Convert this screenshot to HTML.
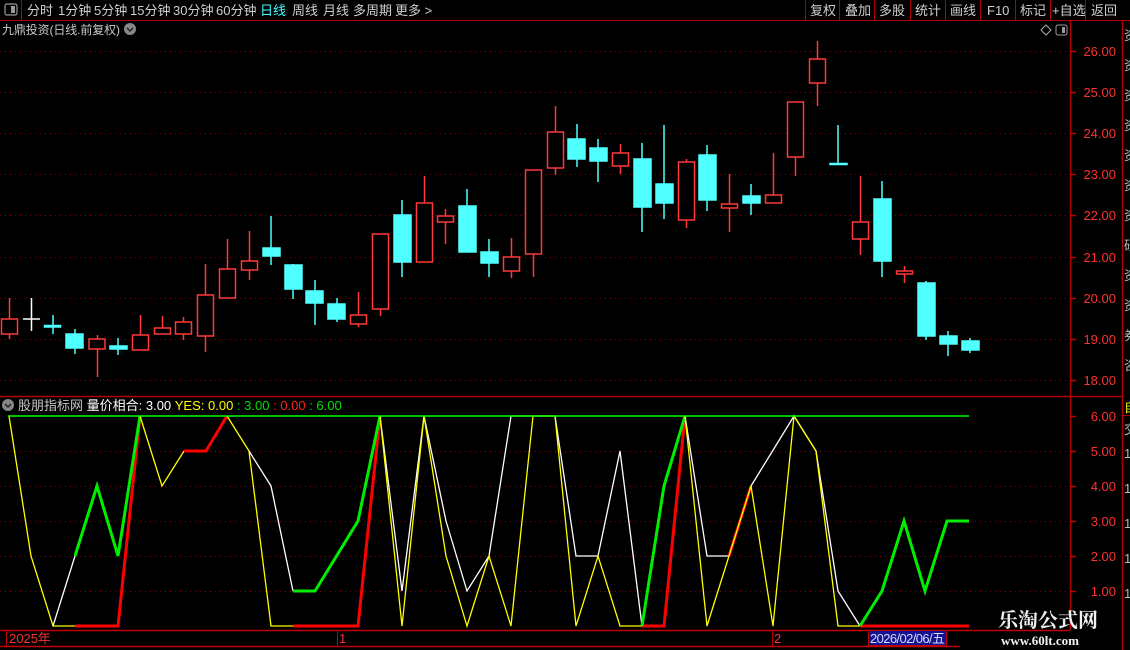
<!DOCTYPE html>
<html><head><meta charset="utf-8"><style>
body{margin:0;background:#000;width:1130px;height:650px;overflow:hidden;font-family:"Liberation Sans","Noto Sans CJK SC",sans-serif}
svg{position:absolute;left:0;top:0}
</style></head><body>
<svg width="1130" height="650" viewBox="0 0 1130 650" font-family="Liberation Sans, Noto Sans CJK SC, sans-serif">
<rect width="1130" height="650" fill="#000"/>
<!-- top bar -->
<line x1="0" y1="20.5" x2="1130" y2="20.5" stroke="#b00000"/>
<line x1="21.5" y1="0" x2="21.5" y2="20" stroke="#b00000"/>
<rect x="5" y="4" width="12" height="11" rx="2" fill="none" stroke="#999" stroke-width="1.2"/><rect x="11" y="6" width="4" height="7" fill="#999"/>
<g font-size="13" fill="#cfcfcf">
<text x="27" y="15">分时</text><text x="58" y="15">1分钟</text><text x="94" y="15">5分钟</text><text x="130" y="15">15分钟</text><text x="173" y="15">30分钟</text><text x="216" y="15">60分钟</text>
<text x="260" y="15" fill="#40ffff">日线</text><text x="292" y="15">周线</text><text x="323" y="15">月线</text><text x="353" y="15">多周期</text><text x="395" y="15">更多 &gt;</text>
<text x="810" y="15">复权</text><text x="845" y="15">叠加</text><text x="879" y="15">多股</text><text x="915" y="15">统计</text><text x="950" y="15">画线</text><text x="987" y="15">F10</text><text x="1020" y="15">标记</text><text x="1052" y="15">+自选</text><text x="1091" y="15">返回</text>
</g>
<g stroke="#b00000"><line x1="805.5" y1="0" x2="805.5" y2="20"/><line x1="839.5" y1="0" x2="839.5" y2="20"/><line x1="874.5" y1="0" x2="874.5" y2="20"/><line x1="910.5" y1="0" x2="910.5" y2="20"/><line x1="945.5" y1="0" x2="945.5" y2="20"/><line x1="980.5" y1="0" x2="980.5" y2="20"/><line x1="1015.5" y1="0" x2="1015.5" y2="20"/><line x1="1050.5" y1="0" x2="1050.5" y2="20"/><line x1="1085.5" y1="0" x2="1085.5" y2="20"/></g>
<text x="2" y="34" font-size="12" fill="#c8c8c8" textLength="118">九鼎投资(日线.前复权)</text>
<circle cx="130" cy="29" r="6" fill="#888"/><path d="M127 28l3 3 3-3" stroke="#222" stroke-width="1.5" fill="none"/>
<path d="M1041 30l5-5 5 5-5 5z" fill="none" stroke="#aaa"/>
<rect x="1056" y="25" width="11" height="10" rx="2" fill="none" stroke="#999"/><rect x="1062" y="27" width="3" height="6" fill="#999"/>
<!-- axes lines -->
<line x1="1070.5" y1="20" x2="1070.5" y2="630" stroke="#b00000" stroke-width="1.5"/>
<line x1="1122.5" y1="20" x2="1122.5" y2="650" stroke="#b00000" stroke-width="1.5"/>
<line x1="0" y1="396.5" x2="1122" y2="396.5" stroke="#b00000" stroke-width="1.5"/>
<line x1="1122" y1="415.5" x2="1130" y2="415.5" stroke="#b00000"/>
<!-- price grid -->
<g stroke="#8a0000" stroke-dasharray="1 4">
<line x1="0" y1="51.5" x2="1068" y2="51.5"/><line x1="0" y1="92.5" x2="1068" y2="92.5"/><line x1="0" y1="133.5" x2="1068" y2="133.5"/><line x1="0" y1="174.5" x2="1068" y2="174.5"/><line x1="0" y1="215.5" x2="1068" y2="215.5"/><line x1="0" y1="257.5" x2="1068" y2="257.5"/><line x1="0" y1="298.5" x2="1068" y2="298.5"/><line x1="0" y1="339.5" x2="1068" y2="339.5"/><line x1="0" y1="380.5" x2="1068" y2="380.5"/>
<line x1="0" y1="451.5" x2="1068" y2="451.5"/><line x1="0" y1="486.5" x2="1068" y2="486.5"/><line x1="0" y1="521.5" x2="1068" y2="521.5"/><line x1="0" y1="556.5" x2="1068" y2="556.5"/><line x1="0" y1="591.5" x2="1068" y2="591.5"/>
</g>
<g fill="#ff3030" font-size="13" text-anchor="end">
<text x="1116" y="56">26.00</text><text x="1116" y="97">25.00</text><text x="1116" y="138">24.00</text><text x="1116" y="179">23.00</text><text x="1116" y="220">22.00</text><text x="1116" y="262">21.00</text><text x="1116" y="303">20.00</text><text x="1116" y="344">19.00</text><text x="1116" y="385">18.00</text>
<text x="1116" y="421">6.00</text><text x="1116" y="456">5.00</text><text x="1116" y="491">4.00</text><text x="1116" y="526">3.00</text><text x="1116" y="561">2.00</text><text x="1116" y="596">1.00</text>
</g>
<g stroke="#c00000" stroke-width="1.5">
<line x1="1070" y1="51.5" x2="1076" y2="51.5"/><line x1="1070" y1="92.5" x2="1076" y2="92.5"/><line x1="1070" y1="133.5" x2="1076" y2="133.5"/><line x1="1070" y1="174.5" x2="1076" y2="174.5"/><line x1="1070" y1="215.5" x2="1076" y2="215.5"/><line x1="1070" y1="257.5" x2="1076" y2="257.5"/><line x1="1070" y1="298.5" x2="1076" y2="298.5"/><line x1="1070" y1="339.5" x2="1076" y2="339.5"/><line x1="1070" y1="380.5" x2="1076" y2="380.5"/>
<line x1="1070" y1="416.5" x2="1076" y2="416.5"/><line x1="1070" y1="451.5" x2="1076" y2="451.5"/><line x1="1070" y1="486.5" x2="1076" y2="486.5"/><line x1="1070" y1="521.5" x2="1076" y2="521.5"/><line x1="1070" y1="556.5" x2="1076" y2="556.5"/><line x1="1070" y1="591.5" x2="1076" y2="591.5"/>
</g>
<!-- right strip -->
<g font-size="13" fill="#bbb"><text x="1124" y="40">资</text><text x="1124" y="70">资</text><text x="1124" y="100">资</text><text x="1124" y="130">资</text><text x="1124" y="160">资</text><text x="1124" y="190">资</text><text x="1124" y="220">资</text><text x="1124" y="250">研</text><text x="1124" y="280">资</text><text x="1124" y="310">资</text><text x="1124" y="340">券</text><text x="1124" y="370">咨</text>
<text x="1124" y="412" fill="#ee0">自</text><text x="1124" y="434">交</text><text x="1124" y="458">1</text><text x="1124" y="493">1</text><text x="1124" y="528">1</text><text x="1124" y="563">1</text><text x="1124" y="598">1</text></g>
<!-- candles -->
<g stroke="#ff3838" stroke-width="1.5" fill="none">
<line x1="9.5" y1="298" x2="9.5" y2="339"/><rect x="1.5" y="319" width="16" height="15" fill="#000"/>
<line x1="97.5" y1="335" x2="97.5" y2="377"/><rect x="89" y="339" width="16" height="10" fill="#000"/>
<line x1="140.5" y1="315" x2="140.5" y2="350"/><rect x="132.5" y="335" width="16" height="15" fill="#000"/>
<line x1="162.5" y1="316" x2="162.5" y2="334"/><rect x="154.5" y="328" width="16" height="6" fill="#000"/>
<line x1="183.5" y1="317" x2="183.5" y2="340"/><rect x="175.5" y="322" width="16" height="12" fill="#000"/>
<line x1="205.5" y1="264" x2="205.5" y2="352"/><rect x="197.5" y="295" width="16" height="41" fill="#000"/>
<line x1="227.5" y1="239" x2="227.5" y2="298"/><rect x="219.5" y="269" width="16" height="29" fill="#000"/>
<line x1="249.5" y1="231" x2="249.5" y2="280"/><rect x="241.5" y="261" width="16" height="9" fill="#000"/>
<line x1="358.5" y1="292" x2="358.5" y2="327"/><rect x="350.5" y="315" width="16" height="9" fill="#000"/>
<line x1="380.5" y1="234" x2="380.5" y2="316"/><rect x="372.5" y="234" width="16" height="75" fill="#000"/>
<line x1="424.5" y1="176" x2="424.5" y2="262"/><rect x="416.5" y="203" width="16" height="59" fill="#000"/>
<line x1="445.5" y1="209" x2="445.5" y2="244"/><rect x="437.5" y="216" width="16" height="6" fill="#000"/>
<line x1="511.5" y1="238" x2="511.5" y2="278"/><rect x="503.5" y="257" width="16" height="14" fill="#000"/>
<line x1="533.5" y1="170" x2="533.5" y2="277"/><rect x="525.5" y="170" width="16" height="84" fill="#000"/>
<line x1="555.5" y1="106" x2="555.5" y2="175"/><rect x="547.5" y="132" width="16" height="36" fill="#000"/>
<line x1="620.5" y1="144" x2="620.5" y2="174"/><rect x="612.5" y="153" width="16" height="13" fill="#000"/>
<line x1="686.5" y1="159" x2="686.5" y2="228"/><rect x="678.5" y="162" width="16" height="58" fill="#000"/>
<line x1="729.5" y1="174" x2="729.5" y2="232"/><rect x="721.5" y="204" width="16" height="4" fill="#000"/>
<line x1="773.5" y1="153" x2="773.5" y2="203"/><rect x="765.5" y="195" width="16" height="8" fill="#000"/>
<line x1="795.5" y1="102" x2="795.5" y2="176"/><rect x="787.5" y="102" width="16" height="55" fill="#000"/>
<line x1="817.5" y1="41" x2="817.5" y2="106"/><rect x="809.5" y="59" width="16" height="24" fill="#000"/>
<line x1="860.5" y1="176" x2="860.5" y2="255"/><rect x="852.5" y="222" width="16" height="17" fill="#000"/>
<line x1="904.5" y1="266" x2="904.5" y2="283"/><rect x="896.5" y="271" width="16" height="3" fill="#000"/>
</g>
<g stroke="#ffffff" stroke-width="1.5"><line x1="31.5" y1="298" x2="31.5" y2="331"/><line x1="23" y1="319" x2="40" y2="319"/></g>
<g stroke="#50ffff" stroke-width="1.5" fill="#50ffff">
<line x1="53" y1="315" x2="53" y2="334"/><rect x="44.5" y="325.5" width="16" height="1.5"/>
<line x1="75" y1="329" x2="75" y2="354"/><rect x="66" y="334" width="17" height="14"/>
<line x1="118" y1="338" x2="118" y2="355"/><rect x="110" y="346" width="17" height="3"/>
<line x1="271" y1="216" x2="271" y2="265"/><rect x="263" y="248" width="17" height="8"/>
<line x1="293" y1="264" x2="293" y2="299"/><rect x="285" y="265" width="17" height="24"/>
<line x1="315" y1="280" x2="315" y2="325"/><rect x="306" y="291" width="17" height="12"/>
<line x1="337" y1="298" x2="337" y2="322"/><rect x="328" y="304" width="17" height="15"/>
<line x1="402" y1="200" x2="402" y2="277"/><rect x="394" y="215" width="17" height="47"/>
<line x1="467" y1="189" x2="467" y2="252"/><rect x="459" y="206" width="17" height="46"/>
<line x1="489" y1="239" x2="489" y2="277"/><rect x="481" y="252" width="17" height="11"/>
<line x1="577" y1="124" x2="577" y2="167"/><rect x="568" y="139" width="17" height="20"/>
<line x1="598" y1="139" x2="598" y2="182"/><rect x="590" y="148" width="17" height="13"/>
<line x1="642" y1="143" x2="642" y2="232"/><rect x="634" y="159" width="17" height="48"/>
<line x1="664" y1="125" x2="664" y2="219"/><rect x="656" y="184" width="17" height="19"/>
<line x1="707" y1="145" x2="707" y2="211"/><rect x="699" y="155" width="17" height="45"/>
<line x1="751" y1="184" x2="751" y2="215"/><rect x="743" y="196" width="17" height="7"/>
<line x1="838" y1="125" x2="838" y2="164"/><rect x="830" y="163.5" width="17" height="1"/>
<line x1="882" y1="181" x2="882" y2="277"/><rect x="874" y="199" width="17" height="62"/>
<line x1="926" y1="281" x2="926" y2="340"/><rect x="918" y="283" width="17" height="53"/>
<line x1="948" y1="331" x2="948" y2="356"/><rect x="940" y="336" width="17" height="8"/>
<line x1="970" y1="338" x2="970" y2="353"/><rect x="962" y="341" width="17" height="9"/>
</g>
<!-- indicator header -->
<circle cx="8" cy="405" r="6" fill="#888"/><path d="M5 404l3 3 3-3" stroke="#222" stroke-width="1.5" fill="none"/>
<text x="18" y="410" font-size="13"><tspan fill="#c8c8c8">股朋指标网 </tspan><tspan fill="#fff">量价相合: 3.00 </tspan><tspan fill="#ffff00">YES: 0.00 </tspan><tspan fill="#00e000">: 3.00 </tspan><tspan fill="#ff2020">: 0.00 </tspan><tspan fill="#00e000">: 6.00</tspan></text>
<!-- indicator lines -->
<g fill="none" stroke-linejoin="miter">
<polyline stroke="#ffff00" stroke-width="1.3" points="9,416 31,556 53,626 75,626"/>
<polyline stroke="#ffffff" stroke-width="1.3" points="53,626 75,556"/>
<polyline stroke="#ff0000" stroke-width="3" points="75,626 118,626 140,416"/>
<polyline stroke="#00ee00" stroke-width="3" points="75,556 97,486 118,556 140,416"/>
<polyline stroke="#ffff00" stroke-width="1.3" points="140,416 162,486 184,451"/>
<polyline stroke="#ff0000" stroke-width="3" points="184,451 206,451 227,416"/>
<polyline stroke="#ffff00" stroke-width="1.3" points="227,416 249,451 271,626 293,626"/>
<polyline stroke="#ffffff" stroke-width="1.3" points="249,451 271,486 293,591"/>
<polyline stroke="#ff0000" stroke-width="3" points="293,626 358,626 380,416"/>
<polyline stroke="#00ee00" stroke-width="3" points="293,591 315,591 358,521 380,416"/>
<polyline stroke="#ffffff" stroke-width="1.3" points="380,416 402,591 424,416 446,521 467,591 489,556 511,416 533,416 555,416 576,556 598,556 620,451 642,626"/>
<polyline stroke="#ffff00" stroke-width="1.3" points="380,416 402,626 424,416 446,556 467,626 489,556 511,626 533,416 555,416 576,626 598,556 620,626 642,626"/>
<polyline stroke="#ff0000" stroke-width="3" points="642,626 664,626 685,416"/>
<polyline stroke="#00ee00" stroke-width="3" points="642,626 664,486 685,416"/>
<polyline stroke="#ffffff" stroke-width="1.3" points="685,416 707,556 729,556"/>
<polyline stroke="#ff0000" stroke-width="3" points="729,556 751,486"/>
<polyline stroke="#ffffff" stroke-width="1.3" points="751,486 794,416 816,451 838,591 860,626"/>
<polyline stroke="#ffff00" stroke-width="1.3" points="685,416 707,626 729,556 751,486 773,626 794,416 816,451 838,626 860,626"/>
<polyline stroke="#ff0000" stroke-width="3" points="860,626 969,626"/>
<polyline stroke="#00ee00" stroke-width="3" points="860,626 882,591 904,521 925,591 947,521 969,521"/>
</g>
<line x1="8" y1="416" x2="969" y2="416" stroke="#00ff00" stroke-width="1.5"/>
<!-- date bar -->
<line x1="0" y1="630.5" x2="1070" y2="630.5" stroke="#c00000" stroke-width="1.5"/>
<line x1="0" y1="646.5" x2="960" y2="646.5" stroke="#c00000" stroke-width="1.5"/>
<g stroke="#c00000"><line x1="6.5" y1="630" x2="6.5" y2="646"/><line x1="337.5" y1="630" x2="337.5" y2="646"/><line x1="772.5" y1="630" x2="772.5" y2="646"/></g>
<g font-size="13" fill="#ff3030"><text x="9" y="643">2025年</text><text x="339" y="643">1</text><text x="774" y="643">2</text></g>
<rect x="868.5" y="630.5" width="78" height="15" fill="#141490" stroke="#c00000"/>
<text x="870" y="643" font-size="13" fill="#d8d8ff" textLength="75">2026/02/06/五</text>
<!-- watermark -->
<text x="998" y="627" font-size="20" font-weight="bold" fill="#f0f0f0" font-family="Noto Serif CJK SC, serif">乐淘公式网</text>
<text x="1001" y="645" font-size="13" font-weight="bold" fill="#f0f0f0" font-family="Liberation Serif, serif">www.60lt.com</text>
</svg>
</body></html>
